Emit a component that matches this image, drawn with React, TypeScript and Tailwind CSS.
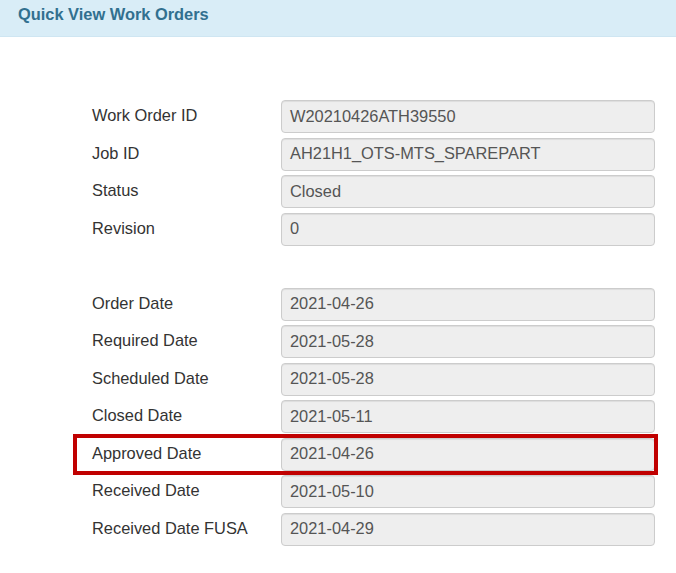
import React from 'react';

type Field = { label: string; value: string; highlight?: boolean };

const generalFields: Field[] = [
  { label: 'Work Order ID', value: 'W20210426ATH39550' },
  { label: 'Job ID', value: 'AH21H1_OTS-MTS_SPAREPART' },
  { label: 'Status', value: 'Closed' },
  { label: 'Revision', value: '0' },
];

const dateFields: Field[] = [
  { label: 'Order Date', value: '2021-04-26' },
  { label: 'Required Date', value: '2021-05-28' },
  { label: 'Scheduled Date', value: '2021-05-28' },
  { label: 'Closed Date', value: '2021-05-11' },
  { label: 'Approved Date', value: '2021-04-26', highlight: true },
  { label: 'Received Date', value: '2021-05-10' },
  { label: 'Received Date FUSA', value: '2021-04-29' },
];

const FieldRow: React.FC<{ field: Field }> = ({ field }) => (
  <div className="relative flex">
    <label className="w-[189px] shrink-0 pt-[4px] text-[#333333] leading-[23.4px]">
      {field.label}
    </label>
    <div className="flex h-[33px] w-[374px] items-center rounded-[4px] border border-[#cccccc] bg-[#eeeeee] pl-[8px] leading-[23.4px] text-[#555555] shadow-[inset_0_1px_1px_rgba(0,0,0,0.075)]">
      {field.value}
    </div>
    {field.highlight && (
      <div className="pointer-events-none absolute left-[-19px] top-[-4px] h-[41px] w-[585px] border-[4.5px] border-[#c00000]" />
    )}
  </div>
);

const App: React.FC = () => {
  return (
    <div
      className="h-[573px] w-[676px] overflow-hidden bg-white text-[16.4px]"
      style={{ fontFamily: '"Liberation Sans", Arial, sans-serif' }}
    >
      {/* Header */}
      <div className="h-[37px] border-b border-[#cfe6f2] bg-[#d9edf7] pl-[18px] pt-[3px]">
        <h3 className="font-bold leading-[23px] text-[#31708f]">Quick View Work Orders</h3>
      </div>

      {/* Form */}
      <div className="flex flex-col gap-y-[4.5px] pl-[92px] pt-[63px]">
        {generalFields.map((f) => (
          <FieldRow key={f.label} field={f} />
        ))}
        <div className="h-[33px]" />
        {dateFields.map((f) => (
          <FieldRow key={f.label} field={f} />
        ))}
      </div>
    </div>
  );
};

export default App;
